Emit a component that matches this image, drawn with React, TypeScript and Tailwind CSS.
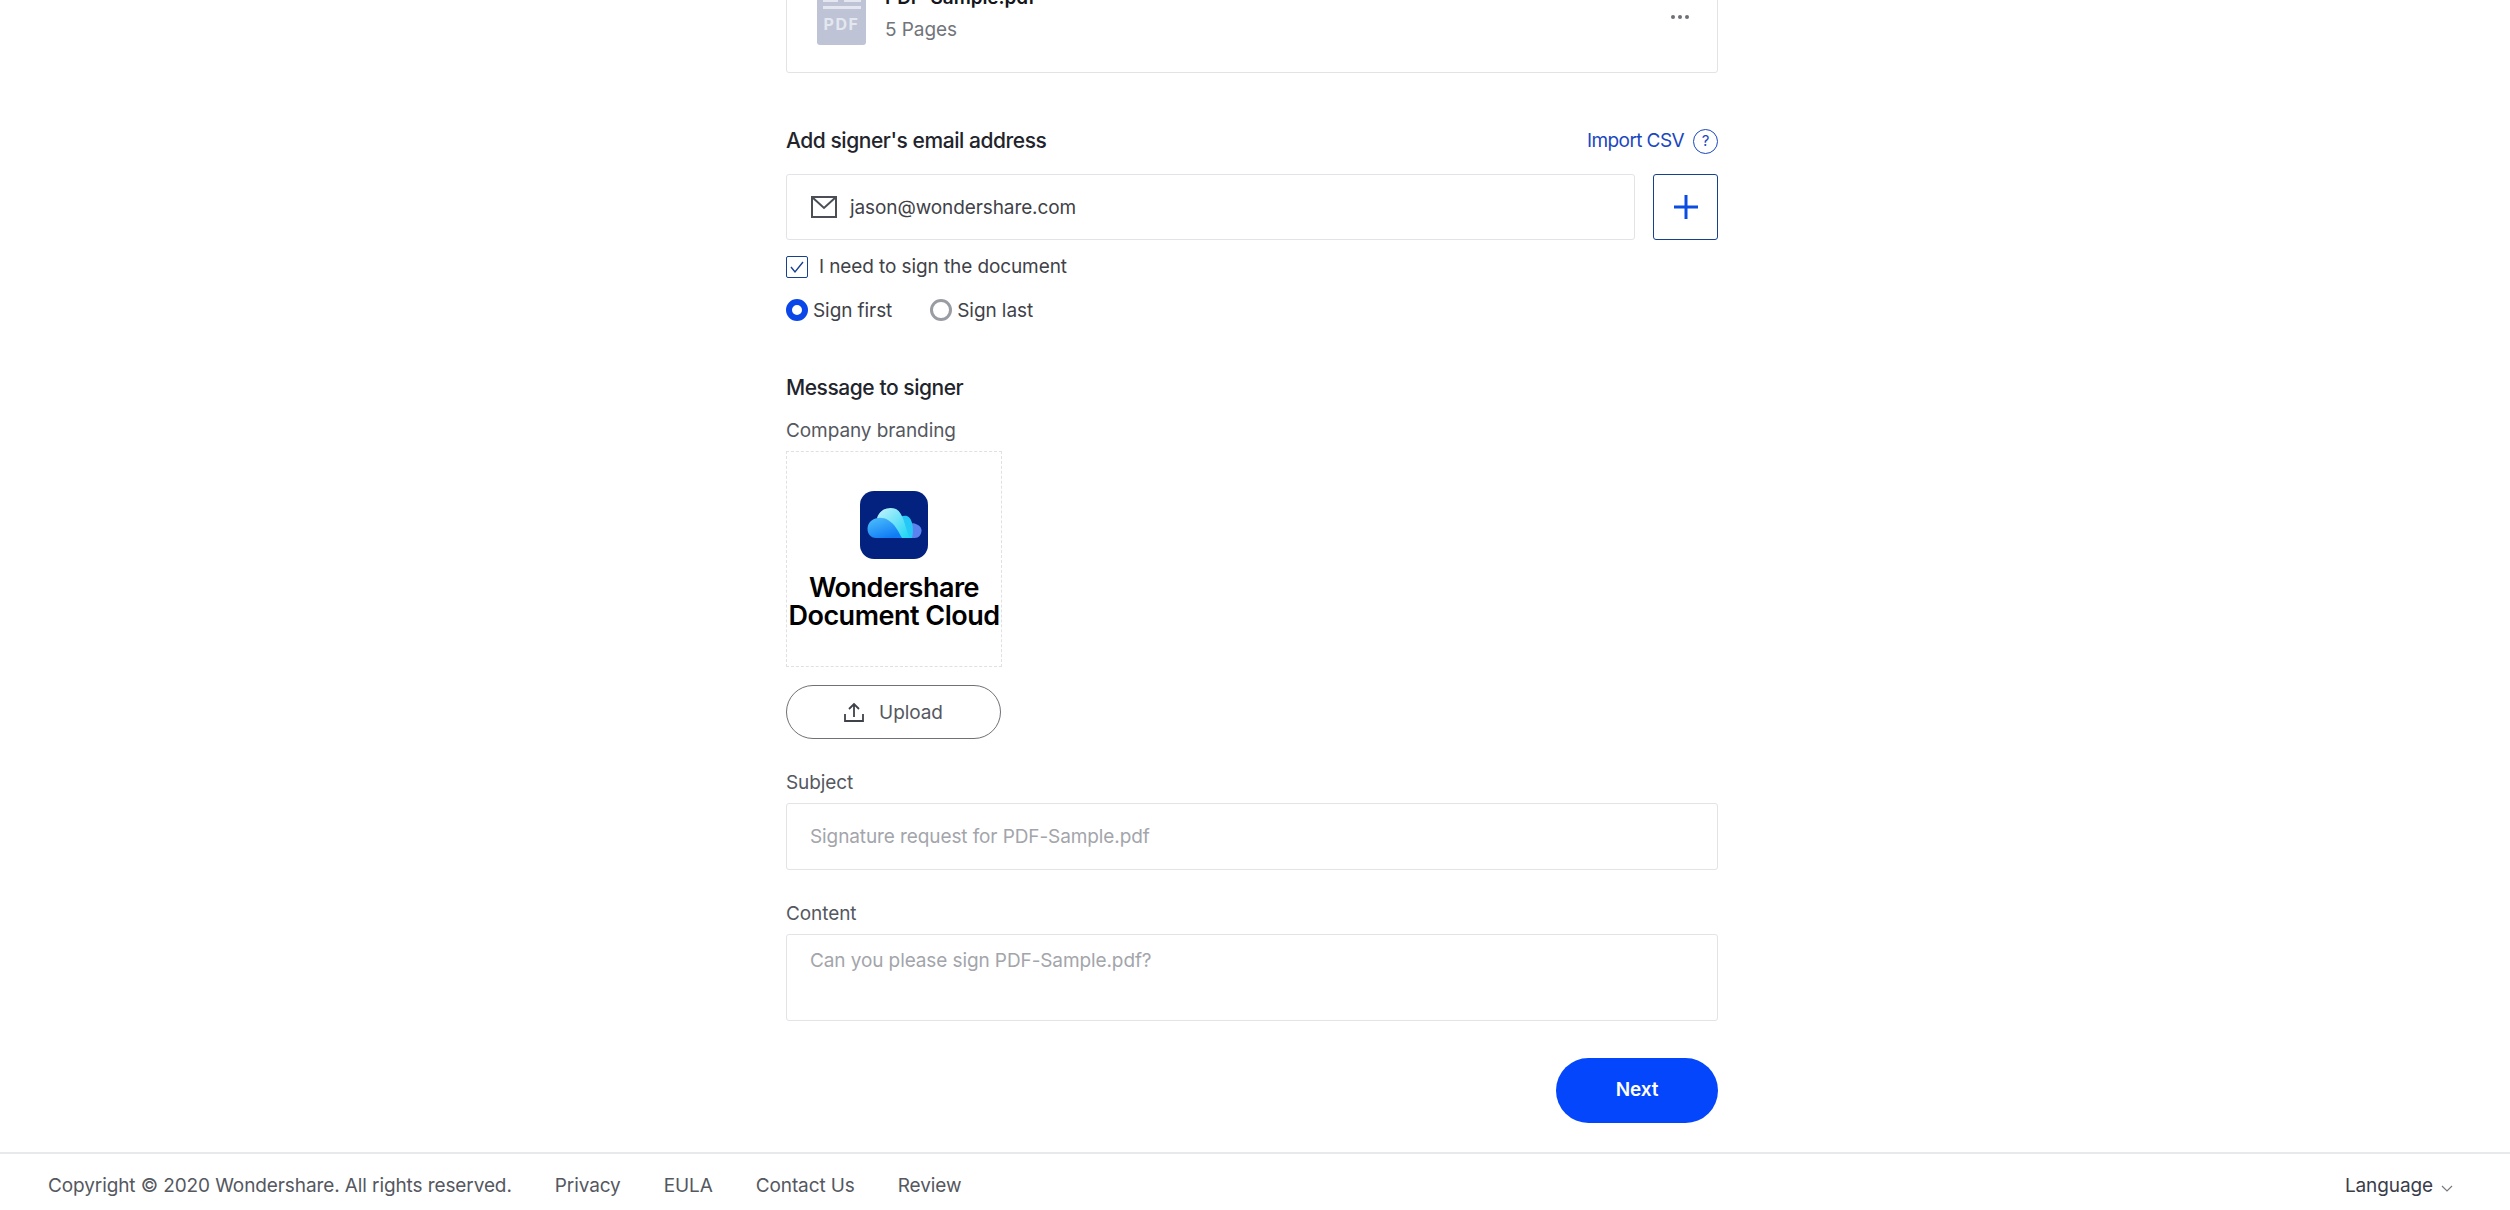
import React from 'react';

function CloudLogo() {
  return (
    <svg viewBox="0 0 68 68" className="w-[68px] h-[68px]">
      <defs>
        <linearGradient id="cloudLeft" x1="0" y1="0" x2="0.6" y2="1">
          <stop offset="0" stopColor="#4fc0fb" />
          <stop offset="1" stopColor="#0f7cf5" />
        </linearGradient>
        <linearGradient id="cloudTop" x1="0" y1="0" x2="1" y2="1">
          <stop offset="0" stopColor="#c5f3fb" />
          <stop offset="1" stopColor="#18d4f5" />
        </linearGradient>
      </defs>
      <rect width="68" height="68" rx="14" fill="#03217e" />
      <path d="M50 47h5a7 7 0 0 0 2-13.500c-2-1-4-1.500-7-1z" fill="#5a83f0" />
      <path d="M40 47h12c2-7 1-20-5-22-4-1-8 1-10 4z" fill="#25c8f7" />
      <path d="M17 27c3-9 12-12 19-9 8 4 9 20 14 29H38L24 32z" fill="url(#cloudTop)" />
      <path d="M16 47C7 47 5 35 11 30c5-4 12-4 17-1 7 4 10 11 14 18z" fill="url(#cloudLeft)" />
    </svg>
  );
}

function PdfIcon() {
  return (
    <div className="w-[49px] h-[68px] bg-[#bec4d6] rounded-[3px] flex flex-col items-center justify-end pb-[12px]">
      <div className="w-[38px] flex justify-between mb-[4px]">
        <span className="w-[15px] h-[3px] bg-[#e4e7ef]" />
        <span className="w-[17px] h-[3px] bg-[#e4e7ef]" />
      </div>
      <div className="w-[38px] h-[3px] bg-[#e4e7ef] mb-[6px]" />
      <span className="text-[16px] leading-[18px] font-bold tracking-[1.5px] text-[#e4e7ef]">PDF</span>
    </div>
  );
}

function FieldLabel({ children }: { children: React.ReactNode }) {
  return <div className="text-[19px] leading-[24px] tracking-[-0.08px] text-[#55585f]">{children}</div>;
}

export default function App() {
  return (
    <div className="h-[1210px] overflow-hidden flex flex-col justify-end bg-white font-['Inter',sans-serif]">
      <main className="shrink-0 w-[932px] ml-[786px] flex flex-col">
        <div className="h-[126px] border border-[#e2e3e6] rounded-[3px] flex items-start justify-between pl-[30px] pr-[28px]">
          <div className="flex pt-[29px]">
            <PdfIcon />
            <div className="ml-[19px] pt-[9px]">
              <div className="text-[19px] leading-[24px] font-semibold tracking-[-0.1px] text-[#14161c]">PDF-Sample.pdf</div>
              <div className="mt-[8px] text-[19px] leading-[24px] tracking-[-0.08px] text-[#71747b]">5 Pages</div>
            </div>
          </div>
          <div className="mt-[67px] flex gap-[3px]">
            <span className="w-[4px] h-[4px] rounded-full bg-[#6d7077]" />
            <span className="w-[4px] h-[4px] rounded-full bg-[#6d7077]" />
            <span className="w-[4px] h-[4px] rounded-full bg-[#6d7077]" />
          </div>
        </div>

        <div className="mt-[53px] flex items-center justify-between h-[28px] pt-[2px]">
          <h2 className="text-[21px] font-medium tracking-[-0.45px] text-[#22242c]">Add signer's email address</h2>
          <div className="flex items-center gap-[9px]">
            <span className="text-[19px] text-[#1a47c0] tracking-[-0.6px]">Import CSV</span>
            <span className="w-[25px] h-[25px] rounded-full border border-[#1a47c0] text-[#1a47c0] text-[15px] flex items-center justify-center">?</span>
          </div>
        </div>

        <div className="mt-[20px] flex justify-between">
          <div className="w-[849px] h-[66px] border border-[#e2e3e6] rounded-[3px] flex items-center pl-[24px]">
            <svg viewBox="0 0 26 22" className="w-[26px] h-[22px]" fill="none" stroke="#4b4e55" strokeWidth="2">
              <rect x="1" y="1" width="24" height="20" />
              <path d="M1 1l12 11L25 1" />
            </svg>
            <span className="ml-[13px] pt-[2px] text-[19px] tracking-[-0.1px] text-[#3f4249]">jason@wondershare.com</span>
          </div>
          <button className="w-[65px] h-[66px] border border-[#17408f] rounded-[3px] flex items-center justify-center">
            <svg viewBox="0 0 24 24" className="w-[24px] h-[24px]" fill="none" stroke="#0a4de0" strokeWidth="3">
              <path d="M12 0v24M0 12h24" />
            </svg>
          </button>
        </div>

        <label className="mt-[15px] h-[24px] flex items-center">
          <span className="w-[22px] h-[22px] border border-[#17408f] rounded-[2px] flex items-center justify-center">
            <svg viewBox="0 0 16 16" className="w-[16px] h-[16px]" fill="none" stroke="#17408f" strokeWidth="1.4">
              <path d="M2 8l4 5 8-10" />
            </svg>
          </span>
          <span className="ml-[11px] text-[19px] leading-[24px] tracking-[-0.1px] text-[#3f4249]">I need to sign the document</span>
        </label>

        <div className="mt-[19px] h-[24px] flex items-center">
          <span className="w-[22px] h-[22px] rounded-full border-[6px] border-[#0b46e8] bg-white" />
          <span className="ml-[5px] pt-[2px] text-[19px] tracking-[-0.08px] text-[#3f4249]">Sign first</span>
          <span className="ml-[38px] w-[22px] h-[22px] rounded-full border-[3px] border-[#9a9ca3] bg-white" />
          <span className="ml-[5px] pt-[2px] text-[19px] tracking-[-0.08px] text-[#3f4249]">Sign last</span>
        </div>

        <h2 className="mt-[52px] text-[21px] leading-[28px] font-medium tracking-[-0.45px] text-[#22242c]">Message to signer</h2>
        <div className="mt-[17px]"><FieldLabel>Company branding</FieldLabel></div>

        <div className="mt-[8px] w-[216px] h-[216px] border border-dashed border-[#dfe0e3] flex flex-col items-center pt-[39px]">
          <CloudLogo />
          <div className="mt-[15px] text-center text-[27px] leading-[28px] font-semibold tracking-[-0.5px] text-black whitespace-nowrap">
            Wondershare
            <br />
            Document Cloud
          </div>
        </div>

        <button className="mt-[18px] w-[215px] h-[54px] rounded-full border border-[#6f7176] flex items-center justify-center gap-[15px] text-[19px] tracking-[-0.08px] text-[#55585f]">
          <svg viewBox="0 0 20 20" className="w-[20px] h-[20px]" fill="none" stroke="#3f4249" strokeWidth="1.8">
            <path d="M1 12v7h18v-7M10 15V2M5 7l5-5 5 5" />
          </svg>
          <span className="pt-[2px]">Upload</span>
        </button>

        <div className="mt-[32px]"><FieldLabel>Subject</FieldLabel></div>
        <div className="mt-[8px] h-[67px] border border-[#e2e3e6] rounded-[3px] flex items-center pl-[23px] pt-[2px] text-[19px] tracking-[-0.1px] text-[#a3a5ab]">
          Signature request for PDF-Sample.pdf
        </div>

        <div className="mt-[32px]"><FieldLabel>Content</FieldLabel></div>
        <div className="mt-[8px] h-[87px] border border-[#e2e3e6] rounded-[3px] pl-[23px] pt-[14px] text-[19px] leading-[24px] tracking-[-0.1px] text-[#a3a5ab]">
          Can you please sign PDF-Sample.pdf?
        </div>

        <div className="mt-[37px] flex justify-end">
          <button className="w-[162px] h-[65px] rounded-full bg-[#0346fb] text-white text-[19px] font-semibold tracking-[-0.1px]">Next</button>
        </div>
      </main>

      <footer className="shrink-0 mt-[29px] h-[58px] border-t-2 border-[#e8e9eb] flex items-center justify-between pt-[8px] pl-[48px] pr-[57px] text-[19px] tracking-[-0.1px] text-[#55585f]">
        <div className="flex items-center gap-[43px]">
          <span>Copyright © 2020 Wondershare. All rights reserved.</span>
          <span>Privacy</span>
          <span>EULA</span>
          <span>Contact Us</span>
          <span>Review</span>
        </div>
        <div className="flex items-center gap-[8px] text-[#3a3d4a]">
          <span>Language</span>
          <svg viewBox="0 0 12 7" className="w-[12px] h-[7px] mt-[4px]" fill="none" stroke="#77797f" strokeWidth="1.2">
            <path d="M1 1l5 5 5-5" />
          </svg>
        </div>
      </footer>
    </div>
  );
}
